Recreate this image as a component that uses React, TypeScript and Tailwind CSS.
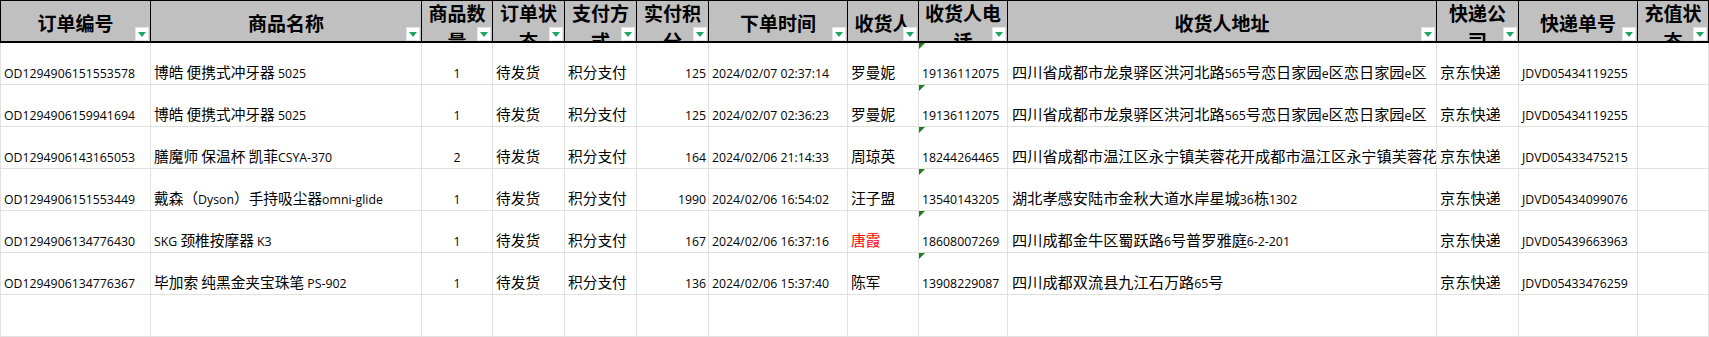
import React from "react";

type Col = { title: string; width: number; wrap?: boolean };

const cols: Col[] = [
  { title: "订单编号", width: 151 },
  { title: "商品名称", width: 271 },
  { title: "商品数量", width: 71, wrap: true },
  { title: "订单状态", width: 72, wrap: true },
  { title: "支付方式", width: 72, wrap: true },
  { title: "实付积分", width: 72, wrap: true },
  { title: "下单时间", width: 139 },
  { title: "收货人", width: 71 },
  { title: "收货人电话", width: 89, wrap: true },
  { title: "收货人地址", width: 429 },
  { title: "快递公司", width: 82, wrap: true },
  { title: "快递单号", width: 119 },
  { title: "充值状态", width: 71, wrap: true },
];

interface Order {
  id: string;
  product: string;
  qty: number;
  status: string;
  pay: string;
  points: number;
  time: string;
  name: string;
  phone: string;
  address: string;
  express: string;
  tracking: string;
  red?: boolean;
}

const orders: Order[] = [
  {
    id: "OD1294906151553578",
    product: "博皓 便携式冲牙器 5025",
    qty: 1,
    status: "待发货",
    pay: "积分支付",
    points: 125,
    time: "2024/02/07 02:37:14",
    name: "罗曼妮",
    phone: "19136112075",
    address: "四川省成都市龙泉驿区洪河北路565号恋日家园e区恋日家园e区",
    express: "京东快递",
    tracking: "JDVD05434119255",
  },
  {
    id: "OD1294906159941694",
    product: "博皓 便携式冲牙器 5025",
    qty: 1,
    status: "待发货",
    pay: "积分支付",
    points: 125,
    time: "2024/02/07 02:36:23",
    name: "罗曼妮",
    phone: "19136112075",
    address: "四川省成都市龙泉驿区洪河北路565号恋日家园e区恋日家园e区",
    express: "京东快递",
    tracking: "JDVD05434119255",
  },
  {
    id: "OD1294906143165053",
    product: "膳魔师 保温杯 凯菲CSYA-370",
    qty: 2,
    status: "待发货",
    pay: "积分支付",
    points: 164,
    time: "2024/02/06 21:14:33",
    name: "周琼英",
    phone: "18244264465",
    address: "四川省成都市温江区永宁镇芙蓉花开成都市温江区永宁镇芙蓉花开",
    express: "京东快递",
    tracking: "JDVD05433475215",
  },
  {
    id: "OD1294906151553449",
    product: "戴森（Dyson）手持吸尘器omni-glide",
    qty: 1,
    status: "待发货",
    pay: "积分支付",
    points: 1990,
    time: "2024/02/06 16:54:02",
    name: "汪子盟",
    phone: "13540143205",
    address: "湖北孝感安陆市金秋大道水岸星城36栋1302",
    express: "京东快递",
    tracking: "JDVD05434099076",
  },
  {
    id: "OD1294906134776430",
    product: "SKG 颈椎按摩器 K3",
    qty: 1,
    status: "待发货",
    pay: "积分支付",
    points: 167,
    time: "2024/02/06 16:37:16",
    name: "唐霞",
    phone: "18608007269",
    address: "四川成都金牛区蜀跃路6号普罗雅庭6-2-201",
    express: "京东快递",
    tracking: "JDVD05439663963",
    red: true,
  },
  {
    id: "OD1294906134776367",
    product: "毕加索 纯黑金夹宝珠笔 PS-902",
    qty: 1,
    status: "待发货",
    pay: "积分支付",
    points: 136,
    time: "2024/02/06 15:37:40",
    name: "陈军",
    phone: "13908229087",
    address: "四川成都双流县九江石万路65号",
    express: "京东快递",
    tracking: "JDVD05433476259",
  },
];

const gridCols =
  "grid grid-cols-[151px_271px_71px_72px_72px_72px_139px_71px_89px_429px_82px_119px_71px]";

const CJK = /([\u3000-\u303f\u4e00-\u9fff\uff00-\uffef]+)/;

// Excel-ish mixed text: CJK runs a touch larger than the latin runs
function Mixed({ text, big }: { text: string; big?: boolean }) {
  const parts = text.split(CJK);
  return (
    <>
      {parts.map((p, i) =>
        i % 2 === 1 ? (
          <span
            key={i}
            className={`font-['Noto_Sans_CJK_SC',sans-serif] ${big ? "text-[15.2px]" : "text-[14.7px]"}`}
          >
            {p}
          </span>
        ) : (
          <span key={i}>{p}</span>
        )
      )}
    </>
  );
}

function FilterButton() {
  return (
    <div className="absolute bottom-0 right-[1px] flex h-[14px] w-[14px] items-center justify-center border border-[#e4e4e4] bg-white">
      <svg width="8" height="5" viewBox="0 0 8 5">
        <polygon points="0,0 8,0 4,5" fill="#1fa565" />
      </svg>
    </div>
  );
}

function Cell({
  children,
  align = "left",
  first,
  marker,
  className = "",
}: {
  children?: React.ReactNode;
  align?: "left" | "center" | "right";
  first?: boolean;
  marker?: boolean;
  className?: string;
}) {
  const justify =
    align === "center" ? "justify-center" : align === "right" ? "justify-end pr-[2px]" : "justify-start pl-[3px]";
  return (
    <div
      className={`relative flex h-[42px] items-end overflow-hidden whitespace-nowrap border-r border-b border-[#e1e1e1] leading-[18px] ${
        first ? "border-l" : ""
      } ${justify} ${className}`}
    >
      {marker && (
        <svg className="absolute left-0 top-0" width="6" height="6" viewBox="0 0 6 6">
          <polygon points="0,0 6,0 0,6" fill="#1b7f1b" />
        </svg>
      )}
      <span className="pb-[1px]">{children}</span>
    </div>
  );
}

export default function App() {
  return (
    <div className="h-[337px] w-[1709px] overflow-hidden bg-white font-['Open_Sans','Noto_Sans_CJK_SC',sans-serif] text-[12.3px] text-black">
      <div className={`${gridCols} h-[43px] border-t border-b-2 border-black bg-[#c0c0c0]`}>
        {cols.map((c, i) => (
          <div
            key={c.title}
            className={`relative overflow-hidden border-r border-black ${i === 0 ? "border-l" : ""}`}
          >
            <div
              className={`px-[3px] text-center font-['Noto_Sans_CJK_SC',sans-serif] text-[19px] font-bold ${
                c.wrap ? "-mt-[2px] leading-[28px]" : "pt-[7px] leading-[29px]"
              }`}
            >
              {c.title}
            </div>
            <FilterButton />
          </div>
        ))}
      </div>

      {orders.map((o) => (
        <div key={o.id + o.time} className={gridCols}>
          <Cell first>{o.id}</Cell>
          <Cell>
            <Mixed text={o.product} />
          </Cell>
          <Cell align="center">{o.qty}</Cell>
          <Cell>
            <Mixed text={o.status} />
          </Cell>
          <Cell>
            <Mixed text={o.pay} />
          </Cell>
          <Cell align="right">{o.points}</Cell>
          <Cell>{o.time}</Cell>
          <Cell className={o.red ? "text-[#ff0000]" : ""}>
            <Mixed text={o.name} />
          </Cell>
          <Cell marker>{o.phone}</Cell>
          <Cell className="pl-[4px]">
            <Mixed text={o.address} big />
          </Cell>
          <Cell>
            <Mixed text={o.express} big />
          </Cell>
          <Cell>{o.tracking}</Cell>
          <Cell />
        </div>
      ))}

      <div className={gridCols}>
        {cols.map((c, i) => (
          <Cell key={c.title} first={i === 0} />
        ))}
      </div>
    </div>
  );
}
